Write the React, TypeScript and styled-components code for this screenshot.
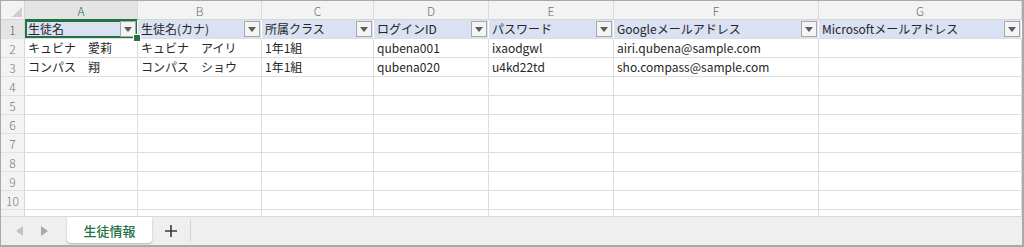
import React from 'react';
import styled, { createGlobalStyle } from 'styled-components';

const GlobalStyle = createGlobalStyle`
  html, body {
    margin: 0;
    padding: 0;
    background: #ffffff;
  }
  * {
    box-sizing: border-box;
  }
`;

const green = '#217346';
const font = `"Noto Sans CJK JP", "Noto Sans", sans-serif`;

const columns = ['A', 'B', 'C', 'D', 'E', 'F', 'G'];

const headers = [
  '生徒名',
  '生徒名(カナ)',
  '所属クラス',
  'ログインID',
  'パスワード',
  'Googleメールアドレス',
  'Microsoftメールアドレス',
];

const rows: string[][] = [
  ['キュビナ　愛莉', 'キュビナ　アイリ', '1年1組', 'qubena001', 'ixaodgwl', 'airi.qubena@sample.com', ''],
  ['コンパス　翔', 'コンパス　ショウ', '1年1組', 'qubena020', 'u4kd22td', 'sho.compass@sample.com', ''],
];

const TOTAL_ROWS = 11;

const Frame = styled.div`
  width: 1024px;
  height: 247px;
  border: 2px solid #a9a9a9;
  border-top-width: 1px;
  border-left-width: 1px;
  display: flex;
  flex-direction: column;
  background: #ffffff;
  font-family: ${font};
  overflow: hidden;
`;

const Sheet = styled.div`
  flex: 1;
  overflow: hidden;
  display: grid;
  grid-template-columns: 24px 113px 124px 112px 115px 125px 205px 1fr;
  grid-auto-rows: 19px;
  align-content: start;
`;

const Corner = styled.div`
  background: #f3f3f3;
  border-right: 1px solid #d6d6d6;
  border-bottom: 1px solid #d6d6d6;
  display: flex;
  align-items: flex-end;
  justify-content: flex-end;
  padding: 0 2px 2px 0;
`;

const ColHeader = styled.div<{ $active?: boolean }>`
  background: ${p => (p.$active ? '#e4e4e4' : '#f3f3f3')};
  border-right: 1px solid #dadada;
  border-bottom: 1px solid ${p => (p.$active ? green : '#d6d6d6')};
  color: ${p => (p.$active ? green : '#6f6f6f')};
  font-size: 12px;
  font-weight: 300;
  display: flex;
  align-items: center;
  justify-content: center;
`;

const RowHeader = styled.div<{ $active?: boolean }>`
  background: ${p => (p.$active ? '#e4e4e4' : '#f3f3f3')};
  border-right: 1px solid #d6d6d6;
  border-bottom: 1px solid #e2e2e2;
  color: ${p => (p.$active ? green : '#777777')};
  font-size: 12px;
  font-weight: 300;
  display: flex;
  align-items: center;
  justify-content: center;
`;

const Cell = styled.div<{ $head?: boolean; $selected?: boolean }>`
  position: relative;
  background: ${p => (p.$head ? '#d9e1f2' : '#ffffff')};
  border-right: 1px solid ${p => (p.$head ? '#ffffff' : '#dedede')};
  border-bottom: 1px solid #dedede;
  color: #262626;
  font-size: 12px;
  line-height: 18px;
  padding-left: 3px;
  display: flex;
  align-items: center;
  justify-content: space-between;
  white-space: nowrap;
  overflow: ${p => (p.$selected ? 'visible' : 'hidden')};
  box-shadow: ${p => (p.$selected ? `inset 0 0 0 2px ${green}` : 'none')};
  z-index: ${p => (p.$selected ? 2 : 0)};

  ${p =>
    p.$selected &&
    `
    &::after {
      content: '';
      position: absolute;
      right: -4px;
      bottom: -4px;
      width: 6px;
      height: 6px;
      background: ${green};
      border: 1px solid #ffffff;
    }
  `}
`;

const DropButton = styled.span`
  width: 16px;
  height: 16px;
  margin-right: 1px;
  flex-shrink: 0;
  border: 1px solid #a8a8a8;
  background: #f4f4f4;
  display: flex;
  align-items: center;
  justify-content: center;
`;

const TabBar = styled.div`
  height: 29px;
  flex-shrink: 0;
  background: #efefef;
  border-top: 1px solid #d9d9d9;
  display: flex;
  align-items: stretch;
  padding-left: 15px;
`;

const NavGroup = styled.div`
  width: 51px;
  display: flex;
  align-items: center;
  gap: 18px;
`;

const SheetTab = styled.div`
  width: 85px;
  margin-bottom: 2px;
  background: #ffffff;
  border-radius: 0 0 4px 4px;
  box-shadow: 0 1px 2px rgba(0, 0, 0, 0.25);
  color: ${green};
  font-size: 13px;
  font-weight: 500;
  display: flex;
  align-items: center;
  justify-content: center;
`;

const AddButton = styled.div`
  width: 39px;
  display: flex;
  align-items: center;
  justify-content: center;
  border-right: 1px solid #d2d2d2;
  margin: 3px 0 4px;
`;

const Triangle = ({ color = '#5c5c5c' }: { color?: string }) => (
  <svg width="8" height="5" viewBox="0 0 8 5">
    <path d="M0 0 H8 L4 5 Z" fill={color} />
  </svg>
);

const NavArrow = ({ dir, color }: { dir: 'left' | 'right'; color: string }) => (
  <svg width="7" height="10" viewBox="0 0 7 10">
    <path d={dir === 'left' ? 'M7 0 V10 L0 5 Z' : 'M0 0 V10 L7 5 Z'} fill={color} />
  </svg>
);

export default function App() {
  const cells: React.ReactNode[] = [];

  cells.push(
    <Corner key="corner">
      <svg width="10" height="10" viewBox="0 0 10 10">
        <path d="M10 0 V10 H0 Z" fill="#cfcfcf" />
      </svg>
    </Corner>
  );
  columns.forEach((c, i) => {
    cells.push(
      <ColHeader key={`h-${c}`} $active={i === 0}>
        {c}
      </ColHeader>
    );
  });

  for (let r = 1; r <= TOTAL_ROWS; r++) {
    cells.push(
      <RowHeader key={`r-${r}`} $active={r === 1}>
        {r}
      </RowHeader>
    );
    columns.forEach((c, i) => {
      if (r === 1) {
        cells.push(
          <Cell key={`${c}${r}`} $head $selected={i === 0}>
            <span>{headers[i]}</span>
            <DropButton>
              <Triangle />
            </DropButton>
          </Cell>
        );
      } else {
        const value = rows[r - 2]?.[i] ?? '';
        cells.push(<Cell key={`${c}${r}`}>{value}</Cell>);
      }
    });
  }

  return (
    <>
      <GlobalStyle />
      <Frame>
        <Sheet>{cells}</Sheet>
        <TabBar>
          <NavGroup>
            <NavArrow dir="left" color="#c4c4c4" />
            <NavArrow dir="right" color="#a9a9a9" />
          </NavGroup>
          <SheetTab>生徒情報</SheetTab>
          <AddButton>
            <svg width="12" height="12" viewBox="0 0 12 12">
              <path d="M6 0 V12 M0 6 H12" stroke="#3a3a3a" strokeWidth="1.6" />
            </svg>
          </AddButton>
        </TabBar>
      </Frame>
    </>
  );
}
